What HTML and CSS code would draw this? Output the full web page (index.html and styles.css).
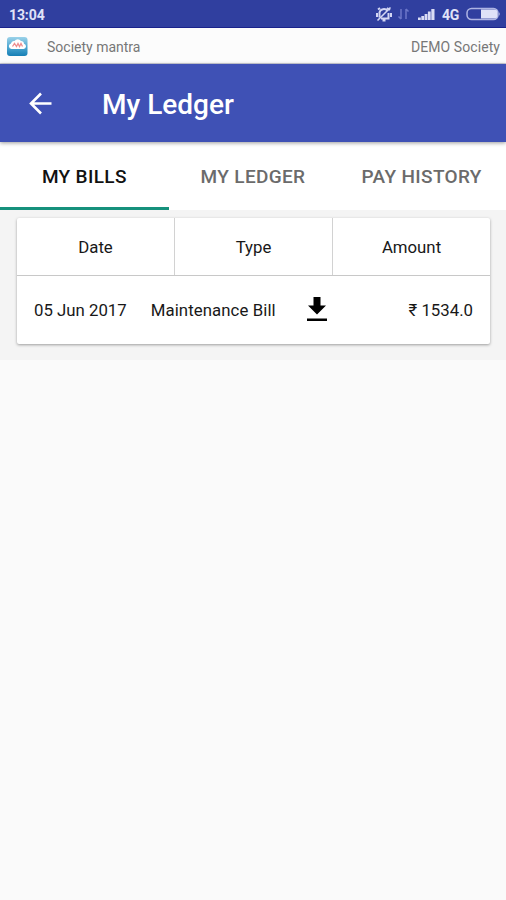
FILE: index.html
```html
<!DOCTYPE html>
<html lang="en">
<head>
<meta charset="utf-8">
<title>My Ledger</title>
<link rel="stylesheet" href="styles.css">
</head>
<body>
<div class="status">
  <span class="clock">13:04</span>
  <svg class="status-icons" width="62" height="18" viewBox="0 0 62 18">
    <g fill="none" stroke="#d3d6f3" stroke-width="2">
      <path d="M4.500 12.500V7.500a4.500 4.500 0 0 1 8-1.500M6 13.500h7.500V8M3 4.500 5 3M12 3l3 2M2 8v4M16 8v4M7.500 15.500h3"/>
      <path d="M2.500 15.500 15.500 2.500" stroke-width="1.600"/>
    </g>
    <path d="M26 4v10M23.500 11.500 26 14M31 14V4M33.500 6.500 31 4" fill="none" stroke="#6c77c9" stroke-width="1.500"/>
    <path d="M43 12.500h2.800V15H43zM46.300 11h2.800v4h-2.800zM49.600 9h2.800v6h-2.800zM52.900 6.500h2.800V15h-2.800zM56.300 4h3.200v11h-3.200z" fill="#d9dcf5"/>
  </svg>
  <span class="network">4G</span>
  <svg class="battery" width="35" height="14" viewBox="0 0 35 14">
    <rect x="1" y="1.500" width="31" height="11" rx="4.500" fill="none" stroke="#aeb4e3" stroke-width="1.500"/>
    <path d="M15 2.500h13.500a3 3 0 0 1 3 3v3a3 3 0 0 1-3 3H15z" fill="#e0e2f8"/>
    <path d="M33 5q1.500 2 0 4z" fill="#c9cdf0"/>
  </svg>
</div>
<div class="brand">
  <svg class="logo" width="21" height="19" viewBox="0 0 21 19">
    <defs><linearGradient id="sky" x1="0" y1="0" x2="0" y2="1"><stop offset="0" stop-color="#9bd2e9"/><stop offset=".55" stop-color="#4ba5d0"/><stop offset="1" stop-color="#167fb5"/></linearGradient></defs>
    <rect width="20.500" height="19" rx="3" fill="url(#sky)"/>
    <path d="M4.500 12a2.800 2.800 0 0 1-.5-5.500 3 3 0 0 1 3.500-2.500 4 4 0 0 1 6.500 0 3 3 0 0 1 3 2.700A2.700 2.700 0 0 1 16.500 12z" fill="#fff"/>
    <path d="m5.500 9.500 2-3 2 3 1.500-3 1.500 3 1.500-3 1.500 3" fill="none" stroke="#ed8d8e" stroke-width="1.300"/>
  </svg>
  <span class="brand-name">Society mantra</span>
  <span class="society">DEMO Society</span>
</div>
<header class="appbar">
  <svg class="back" width="24" height="24" viewBox="0 0 24 24"><path d="M23.500 11.500H3M13 1.500l-10 10 10 10" fill="none" stroke="#fff" stroke-width="2.600"/></svg>
  <h1>My Ledger</h1>
</header>
<nav class="tabs">
  <a class="tab active"><span>MY BILLS</span></a>
  <a class="tab"><span>MY LEDGER</span></a>
  <a class="tab"><span>PAY HISTORY</span></a>
</nav>
<main>
  <section class="card">
    <div class="head"><div>Date</div><div>Type</div><div>Amount</div></div>
    <div class="row">
      <span class="date">05 Jun 2017</span>
      <span class="type">Maintenance Bill</span>
      <svg class="download" width="20" height="24" viewBox="0 0 20 24"><path d="M6.500 0h7v8.500H19L10 17.500 1 8.500h5.500zM0 21.500h20V24H0z" fill="#000"/></svg>
      <span class="amount">₹ 1534.0</span>
    </div>
  </section>
</main>
</body>
</html>
```

FILE: styles.css
```css
* { box-sizing: border-box; }
body { margin: 0; min-height: 900px; background: #fafafa; color: #181818; font-family: Roboto, "Noto Sans", sans-serif; font-size: 16.8px; }
svg { display: block; flex: none; }
.status { height: 28px; display: flex; align-items: center; padding: 2px 5px 0 9px; background: #303f9f; border-bottom: 1px solid #1a238c; color: #e0e3f8; }
.clock { font-size: 14px; font-weight: 700; letter-spacing: -.1px; margin-right: auto; }
.status-icons { margin: -1px 5px 0 0; }
.network { width: 24px; font-size: 14px; font-weight: 700; letter-spacing: -.3px; }
.battery { margin-top: -1px; }
.brand { height: 36px; display: flex; align-items: center; padding: 2px 6px 0 7px; background: #fcfcfc; border-bottom: 1px solid #cfd0da; color: #777; font-size: 14px; }
.brand-name { margin-left: 19px; }
.society { margin-left: auto; letter-spacing: .08px; }
.appbar { position: relative; height: 78px; display: flex; align-items: center; padding: 1px 28px 0; background: #3f51b5; color: #fff; box-shadow: 0 1px 4px rgba(0,0,0,.4); }
.appbar h1 { margin: 2px 0 0 50px; font-size: 28px; font-weight: 500; line-height: 32px; }
.tabs { display: grid; grid-template-columns: repeat(3, 1fr); height: 68px; background: #fff; }
.tab { display: flex; align-items: center; justify-content: center; padding-top: 4px; border-bottom: 3px solid transparent; color: #6b6b6b; font-size: 19px; letter-spacing: .35px; line-height: 23px; font-weight: 500; white-space: nowrap; }
.tab.active { color: #111; border-bottom-color: #16917c; }
main { height: 150px; padding: 8px 16px 0 17px; background: #f4f4f4; }
.card { height: 126px; background: #fff; border-radius: 2px; box-shadow: 0 1px 3px rgba(0,0,0,.36); }
.head { display: grid; grid-template-columns: 157px 158px 158px; height: 58px; border-bottom: 1px solid #c8c8c8; text-align: center; line-height: 57px; }
.head div { padding-top: 1px; height: 57px; }
.head div + div { border-left: 1px solid #d2d2d2; }
.row { height: 68px; display: flex; align-items: center; padding: 0 17px; line-height: 20px; }
.type { margin-left: 24px; letter-spacing: .08px; }
.download { margin-left: 31px; margin-top: -2px; }
.amount { margin-left: auto; }
```
